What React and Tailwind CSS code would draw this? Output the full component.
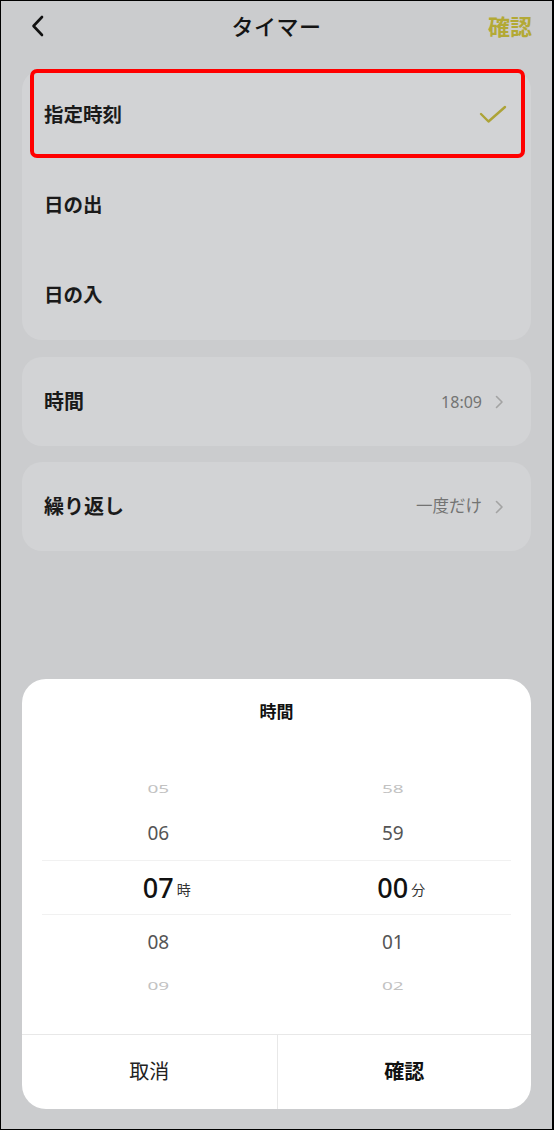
import React from "react";

const font = { fontFamily: '"Noto Sans", "Noto Sans CJK JP", sans-serif' };

function Chevron() {
  return (
    <svg width="9" height="14" viewBox="0 0 9 14" fill="none" className="ml-[13px]">
      <path d="M1.5 1.5 L7 7 L1.5 12.5" stroke="#a3a3a3" strokeWidth="1.6" strokeLinecap="round" strokeLinejoin="round" />
    </svg>
  );
}

function Row({ label }) {
  return (
    <div className="h-[90px] flex items-center justify-between pl-[22px] pr-[25px]">
      <span className="text-[19.5px] font-bold text-[#1a1a1a]">{label}</span>
    </div>
  );
}

export default function App() {
  return (
    <div
      className="w-[554px] h-[1130px] border-l border-t border-r-2 border-b border-black bg-[#cbccce] flex flex-col relative overflow-hidden"
      style={font}
    >
      {/* header */}
      <div className="h-[50px] grid grid-cols-[1fr_auto_1fr] items-center">
        <div className="pl-[30px] flex items-center">
          <svg width="14" height="22" viewBox="0 0 14 22" fill="none">
            <path d="M11 2 L2.5 11 L11 20" stroke="#111" strokeWidth="2.6" strokeLinecap="round" strokeLinejoin="round" />
          </svg>
        </div>
        <div className="text-[22px] font-medium text-[#141414] tracking-[0.5px]">タイマー</div>
        <div className="pr-[20px] text-right text-[22px] font-bold text-[#b3a935]">確認</div>
      </div>

      {/* card 1 */}
      <div className="mx-[21px] mt-[19px] rounded-[20px] bg-[#d2d3d5] flex flex-col">
        <div className="h-[90px] flex items-center justify-between pl-[22px] pr-[24px]">
          <span className="text-[19.5px] font-bold text-[#1a1a1a]">指定時刻</span>
          <svg width="28" height="20" viewBox="0 0 28 20" fill="none">
            <path d="M2 9 L9.5 16.5 L26 2" stroke="#ada337" strokeWidth="2.4" strokeLinecap="round" strokeLinejoin="round" />
          </svg>
        </div>
        <Row label="日の出" />
        <Row label="日の入" />
      </div>

      {/* card 2 */}
      <div className="mx-[21px] mt-[17px] h-[89px] rounded-[20px] bg-[#d2d3d5] flex items-center justify-between pl-[22px] pr-[27px]">
        <span className="text-[20px] font-bold text-[#1a1a1a]">時間</span>
        <div className="flex items-center">
          <span className="text-[16px] text-[#737373]">18:09</span>
          <Chevron />
        </div>
      </div>

      {/* card 3 */}
      <div className="mx-[21px] mt-[16px] h-[89px] rounded-[20px] bg-[#d2d3d5] flex items-center justify-between pl-[22px] pr-[27px]">
        <span className="text-[20px] font-bold text-[#1a1a1a]">繰り返し</span>
        <div className="flex items-center">
          <span className="text-[16.5px] text-[#737373]">一度だけ</span>
          <Chevron />
        </div>
      </div>

      {/* bottom sheet */}
      <div className="mt-auto mb-[20px] mx-[21px] h-[430px] bg-white rounded-[24px] flex flex-col overflow-hidden">
        <div className="h-[66px] flex items-center justify-center text-[17px] font-bold text-[#111]">時間</div>
        <div className="pt-[22px] mx-[20px] flex flex-col">
          <div className="grid grid-cols-2 h-[44px]">
            {["05", "58"].map((v) => (
              <div key={v} className="flex items-center justify-center pr-[2px]">
                <span className="text-[19px] text-[#c2c2c2] scale-y-[0.6] inline-block">{v}</span>
              </div>
            ))}
          </div>
          <div className="grid grid-cols-2 h-[49px] pb-[5px]">
            {["06", "59"].map((v) => (
              <div key={v} className="flex items-center justify-center pr-[2px]">
                <span className="text-[19px] text-[#555]">{v}</span>
              </div>
            ))}
          </div>
          <div className="grid grid-cols-2 h-[55px] border-y border-[#f1f1f1]">
            {[
              ["07", "時"],
              ["00", "分"],
            ].map(([v, u]) => (
              <div key={v} className="grid grid-cols-[1fr_auto_1fr] items-center pr-[2px]">
                <span></span>
                <span className="text-[27px] font-medium text-[#111] leading-none">{v}</span>
                <span className="text-[14px] text-[#333] pl-[3px] self-center mt-[4px]">{u}</span>
              </div>
            ))}
          </div>
          <div className="grid grid-cols-2 h-[49px] pt-[5px]">
            {["08", "01"].map((v) => (
              <div key={v} className="flex items-center justify-center pr-[2px]">
                <span className="text-[19px] text-[#555]">{v}</span>
              </div>
            ))}
          </div>
          <div className="grid grid-cols-2 h-[44px]">
            {["09", "02"].map((v) => (
              <div key={v} className="flex items-center justify-center pr-[2px]">
                <span className="text-[19px] text-[#c2c2c2] scale-y-[0.6] inline-block">{v}</span>
              </div>
            ))}
          </div>
        </div>
        <div className="mt-auto h-[75px] border-t border-[#e8e8e8] grid grid-cols-2">
          <div className="flex items-center justify-center text-[20px] text-[#222]">取消</div>
          <div className="flex items-center justify-center text-[20px] font-bold text-[#111] border-l border-[#e8e8e8]">確認</div>
        </div>
      </div>

      {/* annotation highlight */}
      <div className="absolute left-[29px] top-[68px] w-[495px] h-[89px] border-[4px] border-[#ff0000] rounded-[7px] pointer-events-none"></div>
    </div>
  );
}
